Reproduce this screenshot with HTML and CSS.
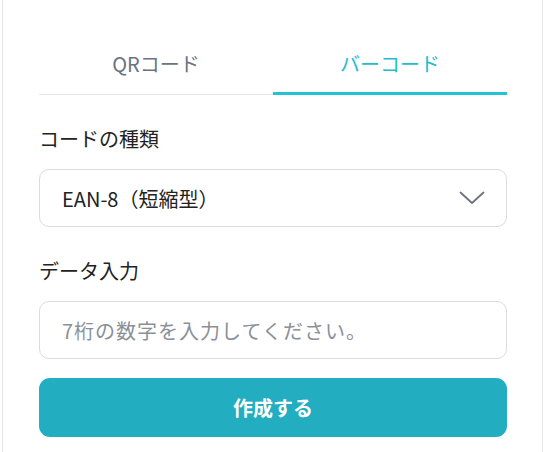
FILE: index.html
```html
<!DOCTYPE html>
<html lang="ja">
<head>
<meta charset="utf-8">
<link rel="stylesheet" href="styles.css">
</head>
<body>
<div class="card">
  <div class="tabs">
    <div class="tab">QRコード</div>
    <div class="tab active">バーコード</div>
  </div>
  <div class="field">
    <div class="label">コードの種類</div>
    <div class="select">
      <span>EAN-8（短縮型）</span>
      <svg class="chev" width="26" height="14" viewBox="0 0 26 14"><path d="M1.5 1.5 L13 12 L24.5 1.5" fill="none" stroke="#6b7280" stroke-width="1.8" stroke-linecap="round" stroke-linejoin="round"/></svg>
    </div>
  </div>
  <div class="field">
    <div class="label">データ入力</div>
    <input class="input" type="text" placeholder="7桁の数字を入力してください。">
  </div>
  <button class="submit">作成する</button>
</div>
</body>
</html>
```
FILE: styles.css
```css
* { box-sizing: border-box; }
html, body { margin: 0; padding: 0; background: #fff; }
body {
  font-family: "Noto Sans CJK JP", "Noto Sans", sans-serif;
  color: #222;
  overflow: hidden;
}
.card {
  margin-left: 2px;
  width: 541px;
  min-height: 452px;
  border: 1px solid #e6e6e6;
  border-top: none;
  padding: 36px 35px 20px 36px;
  display: flex;
  flex-direction: column;
}
.tabs {
  display: flex;
  border-bottom: 1px solid #e5e7eb;
}
.tab {
  flex: 1;
  text-align: center;
  font-size: 20px;
  line-height: 28px;
  padding: 14px 0;
  color: #6b7280;
  border-bottom: 3px solid transparent;
  margin-bottom: -1px;
}
.tab.active {
  color: #22bccd;
  border-bottom-color: #22c4d4;
}
.field { display: flex; flex-direction: column; gap: 16px; margin-top: 30px; }
.label { font-size: 20px; line-height: 28px; color: #222; }
.select {
  height: 58px;
  border: 1px solid #dcdcdc;
  border-radius: 10px;
  display: flex;
  align-items: center;
  justify-content: space-between;
  padding: 0 21px 0 22px;
  font-size: 20px;
  color: #222;
}
.chev { display: block; }
.input {
  height: 58px;
  border: 1px solid #dcdcdc;
  border-radius: 10px;
  padding: 0 22px;
  font-family: inherit;
  font-size: 20px;
  letter-spacing: 1px;
  color: #222;
  outline: none;
  width: 100%;
}
.input::placeholder { color: #8a8f98; }
.submit {
  margin-top: 19px;
  height: 59px;
  border: none;
  border-radius: 11px;
  background: #22aec0;
  color: #fff;
  font-family: inherit;
  font-size: 20px;
  font-weight: 700;
  width: 100%;
}
```
